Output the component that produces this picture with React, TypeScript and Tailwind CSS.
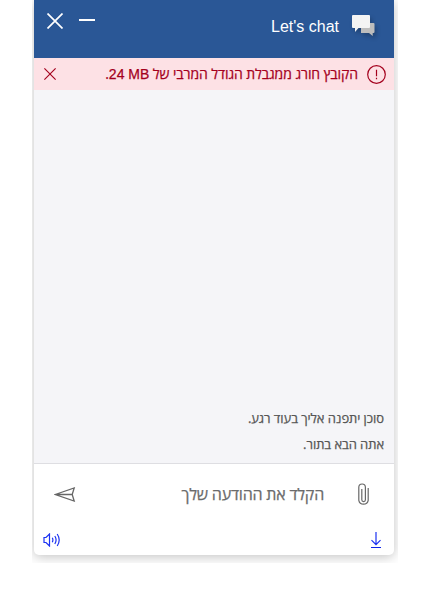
import React from "react";

const hebrew = "font-['Open_Sans','Liberation_Sans',sans-serif] [-webkit-text-stroke:0.25px_currentColor]";

function CloseIcon({ size, width }: { size: number; width: number }) {
  return (
    <svg width={size} height={size} viewBox="0 0 16 16" fill="none" stroke="currentColor" strokeWidth={width}>
      <path d="M.5.5l15 15M15.5.5l-15 15" />
    </svg>
  );
}

function ChatIcon() {
  return (
    <svg className="drop-shadow-[2px_3px_2px_rgba(0,0,0,0.22)]" width="23" height="22" viewBox="0 0 23 22">
      <path d="M9 8h12.5q1 0 1 1v8q0 1-1 1h-.8v3L17 18H9z" fill="#bdbdbd" />
      <path d="M1 0h16q1 0 1 1v11q0 1-1 1H6.5L3 17v-4H1q-1 0-1-1V1q0-1 1-1z" fill="#f4f4f4" />
    </svg>
  );
}

export default function App() {
  return (
    <div className="h-[601px] w-[426px] overflow-hidden bg-white">
      <div className="ml-8 h-[563px] w-[366px] overflow-hidden px-0.5">
        <main dir="rtl" className="flex h-[555px] w-[360px] flex-col overflow-hidden rounded-b-[5px] bg-white shadow-[0_2px_12px_rgba(0,0,0,0.24)]">
          <header className="flex h-[58px] shrink-0 items-start bg-[#2a5796] pr-[19px] pl-[13px] text-white">
            <div className="mt-[15px]"><ChatIcon /></div>
            <h1 className="mt-[15px] mr-[13px] font-['Liberation_Sans',sans-serif] text-[16px] leading-6">Let's chat</h1>
            <button aria-label="מזעור" className="mt-[19px] mr-auto h-[2px] w-4 bg-white" />
            <button aria-label="סגירה" className="mt-[13px] mr-4"><CloseIcon size={16} width={1.7} /></button>
          </header>
          <div className="flex h-8 shrink-0 items-center bg-[#fde1e5] pr-2 pl-[10px] text-[#a4001d]">
            <svg width="19" height="19" viewBox="0 0 19 19" fill="none" stroke="currentColor" strokeWidth="1.2">
              <circle cx="9.5" cy="9.5" r="8.8" />
              <path d="M9.5 4.8v6.5M9.5 12.8v1.5" />
            </svg>
            <p className={`mr-[9px] whitespace-nowrap text-[14px] tracking-[-0.08px] ${hebrew}`}>הקובץ חורג ממגבלת הגודל המרבי של <bdi dir="ltr" className="font-['Liberation_Sans',sans-serif] tracking-normal">24 MB</bdi>.</p>
            <button aria-label="סגירת הודעה" className="mr-auto"><CloseIcon size={12} width={1.5} /></button>
          </div>
          <section className={`flex flex-1 flex-col justify-end bg-[#f5f5f8] pr-[10px] pb-[6px] text-[13px] leading-[26px] tracking-[-0.06px] text-[#555] ${hebrew}`}>
            <p>סוכן יתפנה אליך בעוד רגע.</p>
            <p>אתה הבא בתור.</p>
          </section>
          <footer className="flex h-[92px] shrink-0 flex-col border-t border-[#dedee2]">
            <div className="flex h-[61px] items-center pr-[24px] pl-5">
              <svg width="13" height="23" viewBox="0 0 13 23" fill="none" stroke="#686868" strokeWidth="1.2">
                <path d="M11.2 5v12.3a4.8 4.8 0 0 1-9.4 0V4.3a3.3 3.3 0 0 1 6.6 0v12.5a1.8 1.8 0 0 1-3.6 0V6" />
              </svg>
              <p className={`mr-[33px] whitespace-nowrap pb-[2px] text-[16px] tracking-[-0.2px] text-[#6b6b6b] ${hebrew}`}>הקלד את ההודעה שלך</p>
              <button aria-label="שליחה" className="mr-auto pb-px">
                <svg width="22" height="15" viewBox="0 0 22 15" fill="none" stroke="#666" strokeWidth="1.3">
                  <path d="M1.2 7.5l19-6.5-2 6.5 2 6.5zM1.2 7.5h17" />
                </svg>
              </button>
            </div>
            <div className="flex h-[30px] items-center justify-between pr-3 pl-[9px] text-[#1c32f2]">
              <svg width="12" height="17" viewBox="0 0 12 17" fill="none" stroke="currentColor" strokeWidth="1.2">
                <path d="M6 0v12.5M1.5 8.2L6 12.7l4.5-4.5" />
                <path d="M1 15.5h10" stroke="#0c22e8" />
              </svg>
              <svg width="18" height="14" viewBox="0 0 18 14" fill="none" stroke="currentColor" strokeWidth="1.2">
                <path d="M1 4.5h2L6.5 1v12L3 9.5H1zM9.3 4.8q1.2 2.2 0 4.4M11.8 3q2.6 4 0 8M14.2 1q4 6 0 12" />
              </svg>
            </div>
          </footer>
        </main>
      </div>
    </div>
  );
}
